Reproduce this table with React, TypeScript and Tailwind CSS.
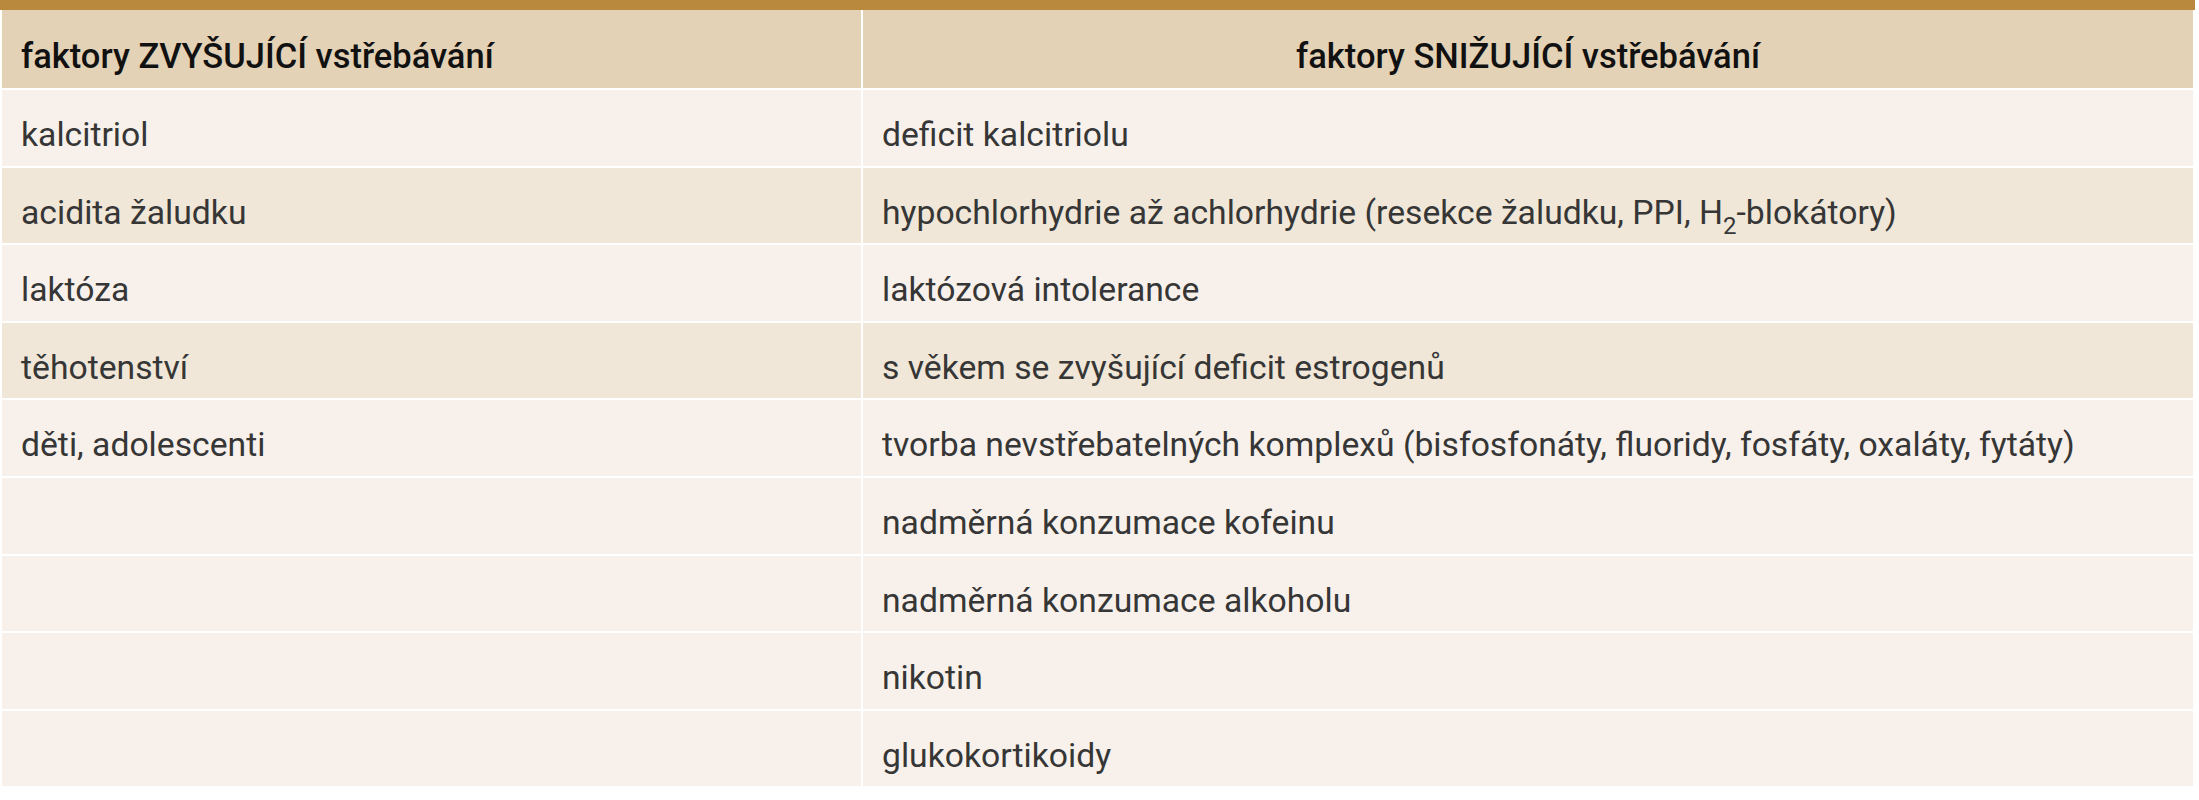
const INCREASE = ['kalcitriol', 'acidita žaludku', 'laktóza', 'těhotenství', 'děti, adolescenti'];

const DECREASE: React.ReactNode[] = [
  'deficit kalcitriolu',
  <>
    hypochlorhydrie až achlorhydrie (resekce žaludku, PPI, H
    <sub className="text-[24px] bottom-[-0.45em]">2</sub>-blokátory)
  </>,
  'laktózová intolerance',
  's věkem se zvyšující deficit estrogenů',
  'tvorba nevstřebatelných komplexů (bisfosfonáty, fluoridy, fosfáty, oxaláty, fytáty)',
  'nadměrná konzumace kofeinu',
  'nadměrná konzumace alkoholu',
  'nikotin',
  'glukokortikoidy',
];

// barva řádku – střídání jen v první části tabulky
function rowBg(i: number): string {
  return i % 2 === 1 && i < 5 ? 'bg-[#f0e7d8]' : 'bg-[#f8f1eb]';
}

export default function App() {
  return (
    <div className="w-[2195px] bg-white font-['Roboto','Liberation_Sans',sans-serif] text-[33.7px]">
      <div className="h-[10px] bg-[#b98a3d]" />

      {/* hlavička */}
      <div className="flex h-[78px] gap-[2px] bg-white pl-[2px]">
        <div className="w-[859px] bg-[#e4d2b6] px-[19px] pt-[26px] text-[34.5px] font-medium leading-[40px] text-[#111111]">
          faktory ZVYŠUJÍCÍ vstřebávání
        </div>
        <div className="w-[1330px] bg-[#e4d2b6] px-[19px] pt-[26px] text-center text-[34.5px] font-medium leading-[40px] text-[#111111]">
          faktory SNIŽUJÍCÍ vstřebávání
        </div>
      </div>

      {/* řádky */}
      {DECREASE.map((right, i) => (
        <div key={i} className="flex h-[77.6px] gap-[2px] bg-white pl-[2px] pt-[2px]">
          <div className={`w-[859px] px-[19px] pt-[25px] leading-[40px] text-[#363636] ${rowBg(i)}`}>
            {INCREASE[i] ?? ''}
          </div>
          <div className={`w-[1330px] px-[19px] pt-[25px] leading-[40px] text-[#363636] ${rowBg(i)}`}>
            {right}
          </div>
        </div>
      ))}
    </div>
  );
}
